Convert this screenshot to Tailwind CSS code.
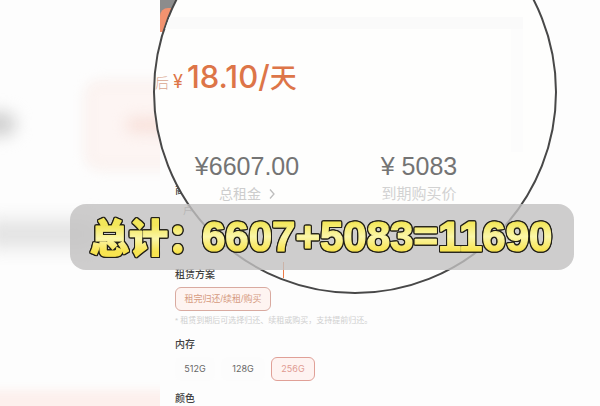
<!DOCTYPE html>
<html lang="zh-CN">
<head>
<meta charset="utf-8">
<meta name="viewport" content="width=device-width, initial-scale=1">
<title>租赁方案</title>
<script src="https://cdn.jsdelivr.net/npm/@tailwindcss/browser@4"></script>
</head>
<body class="bg-[#fdfdfd] font-['Liberation_Sans','Noto_Sans_CJK_SC',sans-serif]">
<main class="relative flex min-h-screen w-full overflow-hidden">

  <!-- Blurred backdrop -->
  <div class="relative w-40 shrink-0 overflow-hidden" aria-hidden="true">
    <div class="absolute -left-6 top-28 h-6 w-10 rounded-full bg-[#d0d0d0] blur-[8px]"></div>
    <div class="absolute left-[84px] top-20 h-[90px] w-32 rounded-2xl border-8 border-[#faf1ee] bg-[#fdf5f3] blur-[6px]"></div>
    <div class="absolute left-[126px] top-[117px] h-4 w-16 rounded-full bg-[#f8e2dc] blur-[7px]"></div>
    <div class="absolute -left-4 top-[222px] h-6 w-28 bg-[#dedede] blur-[10px]"></div>
    <div class="absolute -inset-x-4 top-[390px] h-10 bg-[#fdf0ed] blur-[4px]"></div>
  </div>

  <!-- Order page -->
  <section class="flex min-w-0 flex-1 flex-col text-[#404040]">
    <div class="h-8 w-10 bg-[#8c8c8c] pt-2"><div class="h-6 rounded-tl-lg bg-[#f2926f]"></div></div>
    <div class="flex flex-col px-[15px] pt-[151px]">
      <h2 class="text-[10px] leading-4 font-medium">商品</h2>
      <div class="mt-1 flex h-16 flex-col pl-2 text-[10px] leading-4 text-[#888]">户</div>
      <h2 class="text-[10px] leading-4 font-medium">租赁方案</h2>
      <button class="mt-1 h-6 w-24 rounded-md border border-[#d9aaa0] bg-[#fef4f1] text-[9px] leading-4 whitespace-nowrap text-[#d59a80]">租完归还/续租/购买</button>
      <p class="mt-1 text-[8px] leading-3 whitespace-nowrap text-[#cfcfcf]">* 租赁到期后可选择归还、续租或购买，支持提前归还。</p>
      <h2 class="mt-[10px] text-[10px] leading-4 font-medium">内存</h2>
      <div class="mt-1 flex gap-[6px] font-['Inter','Noto_Sans_CJK_SC',sans-serif] text-[9px] text-[#666]">
        <button class="h-6 w-10 rounded-md bg-[#fcfcfc]">512G</button>
        <button class="h-6 w-11 rounded-md bg-[#fcfcfc]">128G</button>
        <button class="h-6 w-11 rounded-md border border-[#e0a097] bg-[#fef3f1] text-[#e09a92]">256G</button>
      </div>
      <h2 class="mt-[10px] text-[10px] leading-4 font-medium">颜色</h2>
    </div>
  </section>

  <!-- Magnifier lens -->
  <section class="absolute -top-[110px] left-[153px] size-[404px] overflow-hidden rounded-full border-2 border-[#484848] bg-[#fefefd]">
    <div class="mt-[125px] h-3 w-[368px] bg-[#fafafa]"></div>
    <div class="flex h-[123px] w-[368px] flex-col border-r-[12px] border-[#fcfcfc] pt-[30px]">
      <p class="flex items-baseline font-['Inter','Noto_Sans_CJK_SC',sans-serif] leading-9 text-[#dd7548]">
        <span class="text-[14px] font-light text-[#d9a58e]">后</span><span class="ml-1 text-[18px]">¥</span><span class="ml-1 text-[31px] font-medium">18.10/</span><span class="text-[27px] font-medium">天</span>
      </p>
    </div>
    <dl class="ml-[6px] grid w-[344px] grid-cols-2 text-center">
      <div class="flex flex-col">
        <dd class="text-[25px] leading-7 text-[#747474]">¥6607.00</dd>
        <dt class="order-last flex items-center justify-center gap-2 text-[14px] leading-7 text-[#cdcdcd]">总租金
          <svg class="h-2.5 w-1.5" viewBox="0 0 6 10" fill="none" stroke="#bdbdbd" stroke-width="1.3"><path d="M1 0.5 5 5 1 9.5"/></svg>
        </dt>
      </div>
      <div class="flex flex-col">
        <dd class="text-[25px] leading-7 text-[#747474]">¥ 5083</dd>
        <dt class="order-last text-[15px] leading-7 text-[#d2d2d2]">到期购买价</dt>
      </div>
    </dl>
  </section>
  <div class="absolute left-[283px] top-[262px] h-4 w-px bg-[#ee7c48]"></div>

  <!-- Caption -->
  <div class="absolute left-[70px] right-[26px] top-[204px] h-[66px] rounded-2xl bg-[#c2c0c0]/80">
    <svg class="h-full w-full overflow-visible">
      <defs>
        <linearGradient id="gold" x1="0" y1="0" x2="0" y2="1">
          <stop offset="0.2" stop-color="#f3e75a"/>
          <stop offset="0.5" stop-color="#fbf6a8"/>
          <stop offset="0.8" stop-color="#f8e450"/>
        </linearGradient>
      </defs>
      <g class="font-['Liberation_Sans','Noto_Sans_CJK_SC',sans-serif] font-bold [filter:drop-shadow(1px_0_0_#222018)_drop-shadow(-1px_0_0_#222018)_drop-shadow(0_1px_0_#222018)_drop-shadow(0_-1px_0_#222018)]" fill="url(#gold)" stroke="url(#gold)" stroke-width="1.2" stroke-linejoin="round">
        <text class="font-black" x="20" y="48" font-size="39">总计：</text>
        <text x="132" y="47" font-size="42">6607+5083=11690</text>
      </g>
    </svg>
  </div>
</main>
</body>
</html>
